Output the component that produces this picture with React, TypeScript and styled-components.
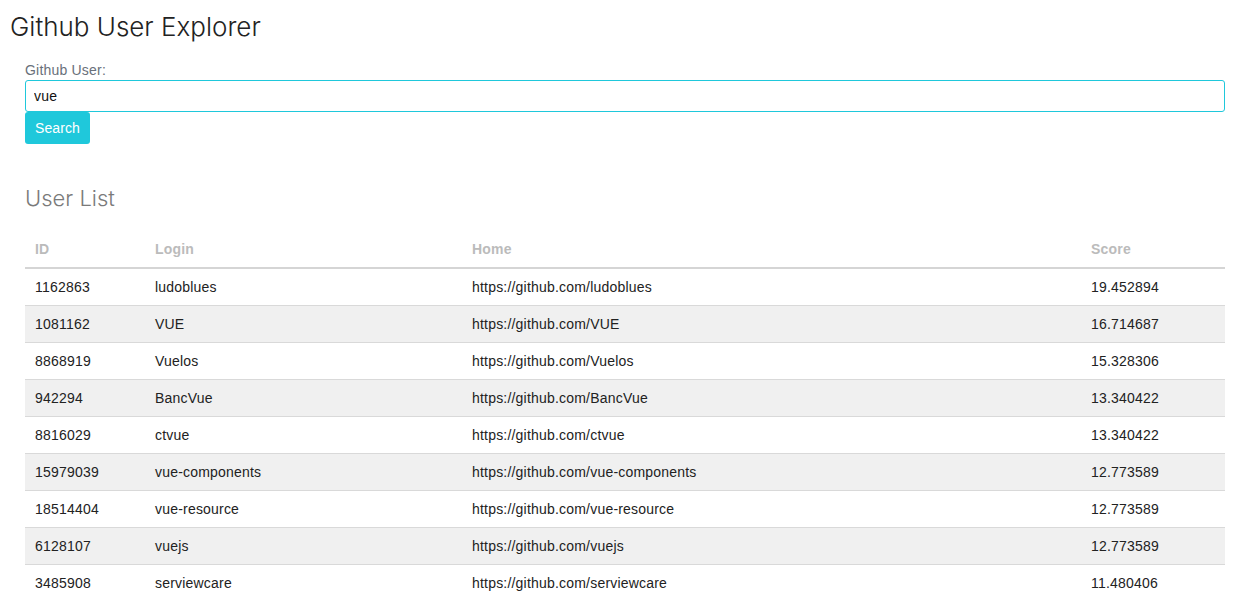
import styled, { createGlobalStyle } from 'styled-components';

type User = {
  id: number;
  login: string;
  score: string;
};

const users: User[] = [
  { id: 1162863, login: 'ludoblues', score: '19.452894' },
  { id: 1081162, login: 'VUE', score: '16.714687' },
  { id: 8868919, login: 'Vuelos', score: '15.328306' },
  { id: 942294, login: 'BancVue', score: '13.340422' },
  { id: 8816029, login: 'ctvue', score: '13.340422' },
  { id: 15979039, login: 'vue-components', score: '12.773589' },
  { id: 18514404, login: 'vue-resource', score: '12.773589' },
  { id: 6128107, login: 'vuejs', score: '12.773589' },
  { id: 3485908, login: 'serviewcare', score: '11.480406' },
];

const GlobalStyle = createGlobalStyle`
  body {
    margin: 0;
    background: #fff;
    color: #111;
    font-family: "Liberation Sans", Arial, sans-serif;
    font-size: 14px;
    letter-spacing: 0.2px;
  }
`;

const Page = styled.div`
  padding: 10px 29px 0 10px;
`;

const Title = styled.h1`
  margin: 0;
  font-family: Inter, "Liberation Sans", sans-serif;
  font-weight: 300;
  font-size: 26px;
  line-height: 34px;
  letter-spacing: 0;
  color: #222;
`;

const Content = styled.div`
  padding: 18px 0 0 15px;
`;

const Label = styled.label`
  display: block;
  color: #69707a;
  font-size: 14px;
  line-height: 16px;
  margin-bottom: 2px;
`;

const Input = styled.input`
  display: block;
  box-sizing: border-box;
  width: 100%;
  height: 32px;
  margin: 0;
  padding: 0 8px;
  border: 1px solid #1fc8db;
  border-radius: 3px;
  font-family: "Liberation Sans", Arial, sans-serif;
  font-size: 14px;
  letter-spacing: 0.2px;
  color: #111;
  outline: none;
`;

const Button = styled.button`
  display: block;
  height: 32px;
  padding: 0 10px;
  margin: 0;
  border: none;
  border-radius: 3px;
  background: #1fc8db;
  color: #fff;
  font-family: "Liberation Sans", Arial, sans-serif;
  font-size: 14px;
  letter-spacing: 0.1px;
`;

const SectionTitle = styled.h2`
  margin: 39px 0 0;
  font-family: Inter, "Liberation Sans", sans-serif;
  font-weight: 300;
  font-size: 22px;
  line-height: 30px;
  letter-spacing: 0;
  color: #7a7a7a;
`;

const Table = styled.table`
  width: 100%;
  margin-top: 19px;
  border-collapse: collapse;
  table-layout: fixed;
`;

const Th = styled.th<{ width: number }>`
  box-sizing: border-box;
  width: ${({ width }) => width}px;
  text-align: left;
  padding: 8px 10px 8px;
  font-weight: 700;
  color: #bbb;
  line-height: 19px;
  border-bottom: 2px solid #d5d5d5;
`;

const Row = styled.tr<{ striped: boolean }>`
  background: ${({ striped }) => (striped ? '#f0f0f0' : '#fff')};
`;

const Td = styled.td`
  padding: 9px 10px 8px;
  line-height: 19px;
  color: #222;
  border-bottom: 1px solid #d9d9d9;
  white-space: nowrap;
`;

export default function App() {
  return (
    <>
      <GlobalStyle />
      <Page>
        <Title>Github User Explorer</Title>
        <Content>
          <Label>Github User:</Label>
          <Input defaultValue="vue" />
          <Button>Search</Button>
          <SectionTitle>User List</SectionTitle>
          <Table>
            <thead>
              <tr>
                <Th width={120}>ID</Th>
                <Th width={317}>Login</Th>
                <Th width={619}>Home</Th>
                <Th width={144}>Score</Th>
              </tr>
            </thead>
            <tbody>
              {users.map((user, i) => (
                <Row key={user.id} striped={i % 2 === 1}>
                  <Td>{user.id}</Td>
                  <Td>{user.login}</Td>
                  <Td>https://github.com/{user.login}</Td>
                  <Td>{user.score}</Td>
                </Row>
              ))}
            </tbody>
          </Table>
        </Content>
      </Page>
    </>
  );
}
